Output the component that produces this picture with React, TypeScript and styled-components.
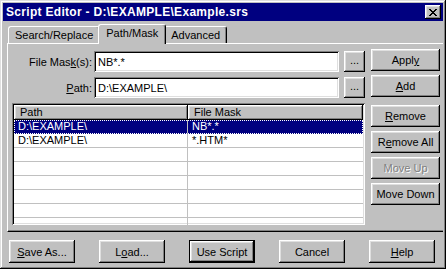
import styled, { createGlobalStyle } from 'styled-components'

const GlobalStyle = createGlobalStyle`
  html, body {
    margin: 0;
    padding: 0;
    background: #c0c0c0;
  }
  body {
    font-family: "Liberation Sans", Arial, sans-serif;
    font-size: 11px;
    color: #000;
  }
  * { box-sizing: border-box; }
`

// bevels in the classic 3D look
const raised = `
  box-shadow: inset -1px -1px #000, inset 1px 1px #fff,
    inset -2px -2px #808080, inset 2px 2px #dfdfdf;
`
const sunken = `
  box-shadow: inset 1px 1px #808080, inset -1px -1px #fff,
    inset 2px 2px #000, inset -2px -2px #dfdfdf;
`

const Window = styled.div`
  width: 446px;
  height: 269px;
  padding: 3px;
  background: #c0c0c0;
  display: flex;
  flex-direction: column;
  box-shadow: inset -1px -1px #000, inset 1px 1px #dfdfdf,
    inset -2px -2px #808080, inset 2px 2px #fff;
`

const TitleBar = styled.div`
  height: 18px;
  flex: none;
  display: flex;
  align-items: center;
  padding-left: 3px;
  background: #000080;
  color: #fff;
  font-weight: bold;
  font-size: 12px;
  letter-spacing: 0.3px;
`

const CloseButton = styled.div`
  margin-left: auto;
  margin-right: 2px;
  width: 16px;
  height: 14px;
  background: #c0c0c0;
  display: flex;
  align-items: center;
  justify-content: center;
  ${raised}
`

const Body = styled.div`
  flex: 1;
  display: flex;
  flex-direction: column;
  padding: 3px 0 0 4px;
`

const TabStrip = styled.div`
  height: 19px;
  display: flex;
  align-items: flex-end;
  padding-left: 1px;
`

const Tab = styled.div<{ $active?: boolean }>`
  position: relative;
  z-index: ${(p) => (p.$active ? 3 : 2)};
  height: ${(p) => (p.$active ? 20 : 17)}px;
  margin: 0 ${(p) => (p.$active ? -2 : 0)}px ${(p) => (p.$active ? -1 : 0)}px;
  padding: ${(p) => (p.$active ? '2px 7px 0' : '2px 6px 0')};
  background: #c0c0c0;
  border-top: 1px solid #fff;
  border-left: 1px solid #fff;
  border-right: 1px solid #000;
  border-radius: 3px 3px 0 0;
  box-shadow: inset -1px 0 #808080;
  line-height: 13px;
`

const Panel = styled.div`
  position: relative;
  z-index: 1;
  height: 189px;
  display: flex;
  gap: 6px;
  padding-left: 4px;
  border-top: 1px solid #fff;
  border-left: 1px solid #fff;
  border-bottom: 1px solid #000;
  box-shadow: inset 0 -1px #808080;
`

const LeftCol = styled.div`
  width: 353px;
  padding-top: 7px;
  display: flex;
  flex-direction: column;
  gap: 5px;
`

const FieldRow = styled.div`
  display: flex;
  align-items: center;
`

const Label = styled.label`
  width: 80px;
  margin-right: 2px;
  text-align: right;
`

const Field = styled.div`
  width: 245px;
  height: 21px;
  padding-left: 4px;
  display: flex;
  align-items: center;
  background: #fff;
  ${sunken}
`

const Button = styled.button<{ $w?: number; $h?: number; $default?: boolean }>`
  width: ${(p) => p.$w ?? 69}px;
  height: ${(p) => p.$h ?? 22}px;
  flex: none;
  padding: 0;
  border: 0;
  background: #c0c0c0;
  font: inherit;
  color: #000;
  ${(p) =>
    p.$default
      ? `box-shadow: inset 0 0 0 1px #000, inset -2px -2px #000, inset 2px 2px #fff,
          inset -3px -3px #808080, inset 3px 3px #dfdfdf;`
      : raised}

  &:disabled {
    color: #808080;
    text-shadow: 1px 1px #fff;
  }
`

const DotsButton = styled(Button)`
  margin-left: 5px;
  padding-bottom: 4px;
`

const ListView = styled.div`
  height: 122px;
  padding: 2px;
  background: #fff;
  overflow: hidden;
  ${sunken}
`

const Columns = styled.div`
  display: grid;
  grid-template-columns: 174px 1fr;
`

const HeaderCell = styled.div`
  height: 15px;
  line-height: 14px;
  padding-left: 6px;
  background: #c0c0c0;
  ${raised}
`

const Cell = styled.div<{ $selected?: boolean }>`
  height: 14px;
  line-height: 13px;
  padding-left: 4px;
  border-bottom: 1px solid #c0c0c0;
  &:first-child {
    border-right: 1px solid #c0c0c0;
  }
  ${(p) => p.$selected && 'background: #000080; color: #fff; border-color: #000080;'}
`

const SelectedRow = styled(Columns)`
  outline: 1px dotted #fff;
  outline-offset: -1px;
`

const RightCol = styled.div`
  width: 69px;
  padding-top: 5px;
  display: flex;
  flex-direction: column;
  gap: 4px;
`

const Spacer = styled.div<{ $h: number }>`
  height: ${(p) => p.$h}px;
  margin-top: -4px;
`

const Footer = styled.div`
  display: flex;
  gap: 24px;
  padding: 8px 0 0 2px;
`

const rows = [
  { path: 'D:\\EXAMPLE\\', mask: 'NB*.*' },
  { path: 'D:\\EXAMPLE\\', mask: '*.HTM*' },
]

export default function App() {
  return (
    <>
      <GlobalStyle />
      <Window>
        <TitleBar>
          Script Editor - D:\EXAMPLE\Example.srs
          <CloseButton>
            <svg width="8" height="7" viewBox="0 0 8 7" shapeRendering="crispEdges">
              <path
                d="M0 0h2v1h-2zM6 0h2v1h-2zM1 1h2v1h-2zM5 1h2v1h-2zM2 2h4v1h-4zM3 3h2v1h-2zM2 4h4v1h-4zM1 5h2v1h-2zM5 5h2v1h-2zM0 6h2v1h-2zM6 6h2v1h-2z"
                fill="#000"
              />
            </svg>
          </CloseButton>
        </TitleBar>
        <Body>
          <TabStrip>
            <Tab>Search/Replace</Tab>
            <Tab $active>Path/Mask</Tab>
            <Tab>Advanced</Tab>
          </TabStrip>
          <Panel>
            <LeftCol>
              <FieldRow>
                <Label>
                  File Mas<u>k</u>(s):
                </Label>
                <Field>NB*.*</Field>
                <DotsButton $w={21} $h={21}>...</DotsButton>
              </FieldRow>
              <FieldRow>
                <Label>
                  <u>P</u>ath:
                </Label>
                <Field>D:\EXAMPLE\</Field>
                <DotsButton $w={21} $h={21}>...</DotsButton>
              </FieldRow>
              <ListView>
                <Columns>
                  <HeaderCell>Path</HeaderCell>
                  <HeaderCell>File Mask</HeaderCell>
                </Columns>
                {rows.map((r, i) =>
                  i === 0 ? (
                    <SelectedRow key={i}>
                      <Cell $selected>{r.path}</Cell>
                      <Cell $selected>{r.mask}</Cell>
                    </SelectedRow>
                  ) : (
                    <Columns key={i}>
                      <Cell>{r.path}</Cell>
                      <Cell>{r.mask}</Cell>
                    </Columns>
                  ),
                )}
                {Array.from({ length: 6 }, (_, i) => (
                  <Columns key={`e${i}`}>
                    <Cell />
                    <Cell />
                  </Columns>
                ))}
              </ListView>
            </LeftCol>
            <RightCol>
              <Button>
                Appl<u>y</u>
              </Button>
              <Button>
                <u>A</u>dd
              </Button>
              <Spacer $h={4} />
              <Button>
                <u>R</u>emove
              </Button>
              <Button>
                R<u>e</u>move All
              </Button>
              <Button disabled>Move Up</Button>
              <Button>Move Down</Button>
            </RightCol>
          </Panel>
          <Footer>
            <Button $w={66} $h={23}>
              <u>S</u>ave As...
            </Button>
            <Button $w={66} $h={23}>
              L<u>o</u>ad...
            </Button>
            <Button $w={66} $h={23} $default>
              Use Script
            </Button>
            <Button $w={66} $h={23}>
              Cancel
            </Button>
            <Button $w={66} $h={23}>
              <u>H</u>elp
            </Button>
          </Footer>
        </Body>
      </Window>
    </>
  )
}
